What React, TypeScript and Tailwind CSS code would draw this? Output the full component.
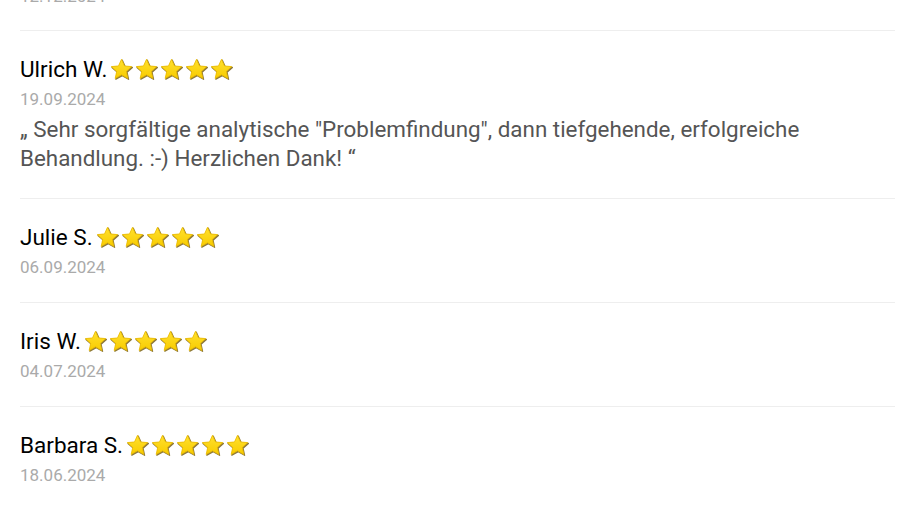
import React from 'react';

type Review = {
  name: string;
  date: string;
  text?: string;
};

const reviews: Review[] = [
  {
    name: 'Ulrich W.',
    date: '19.09.2024',
    text: '„ Sehr sorgfältige analytische "Problemfindung", dann tiefgehende, erfolgreiche Behandlung. :-) Herzlichen Dank! “',
  },
  { name: 'Julie S.', date: '06.09.2024' },
  { name: 'Iris W.', date: '04.07.2024' },
  { name: 'Barbara S.', date: '18.06.2024' },
];

const STAR = '12,2.2 14.9,8.6 21.8,9.2 16.6,13.8 18.1,20.6 12,17.1 5.9,20.6 7.4,13.8 2.2,9.2 9.1,8.6';

const Star = ({ id }: { id: string }) => (
  <svg width="25" height="25" viewBox="0 0 24 24" className="block -mx-px">
    <defs>
      <linearGradient id={id} x1="0" y1="0" x2="0" y2="1">
        <stop offset="0" stopColor="#FFE02E" />
        <stop offset="1" stopColor="#F8CC00" />
      </linearGradient>
    </defs>
    <polygon points={STAR} fill="#8f7a3a" strokeLinejoin="round" stroke="#8f7a3a" strokeWidth="1.2" transform="translate(0.7 0.8)" />
    <polygon points={STAR} fill={`url(#${id})`} stroke="#EDBD00" strokeWidth="0.8" strokeLinejoin="round" />
  </svg>
);

const Stars = ({ prefix }: { prefix: string }) => (
  <div className="flex items-center gap-[2px]">
    {[0, 1, 2, 3, 4].map((i) => (
      <Star key={i} id={`${prefix}-${i}`} />
    ))}
  </div>
);

export default function App() {
  return (
    <div className="w-[911px] h-[528px] overflow-hidden bg-white" style={{ fontFamily: 'Roboto, "Liberation Sans", sans-serif' }}>
      <div className="w-[875px] ml-5">
        {/* previous review, scrolled almost out of view */}
        <div className="border-b border-[#eeeeee] pb-[22px]">
          <div className="-mt-[16px] text-[17px] leading-[24px] text-[#aaaaaa]">12.12.2024</div>
        </div>

        {reviews.map((r, idx) => (
          <div
            key={idx}
            className={`pt-[22px] ${idx < reviews.length - 1 ? 'border-b border-[#eeeeee]' : ''} ${r.text ? 'pb-[25px]' : 'pb-[23px]'}`}
          >
            <div className="flex items-center gap-[3px] h-[30px] pt-[2px]">
              <span className="text-[22.5px] leading-[30px] text-black">{r.name}</span>
              <Stars prefix={`s${idx}`} />
            </div>
            <div className="mt-[4px] text-[17px] leading-[24px] text-[#aaaaaa]">{r.date}</div>
            {r.text && (
              <p className="mt-[4px] text-[22.4px] leading-[29px] text-[#555555] pr-[40px]">{r.text}</p>
            )}
          </div>
        ))}
      </div>
    </div>
  );
}
